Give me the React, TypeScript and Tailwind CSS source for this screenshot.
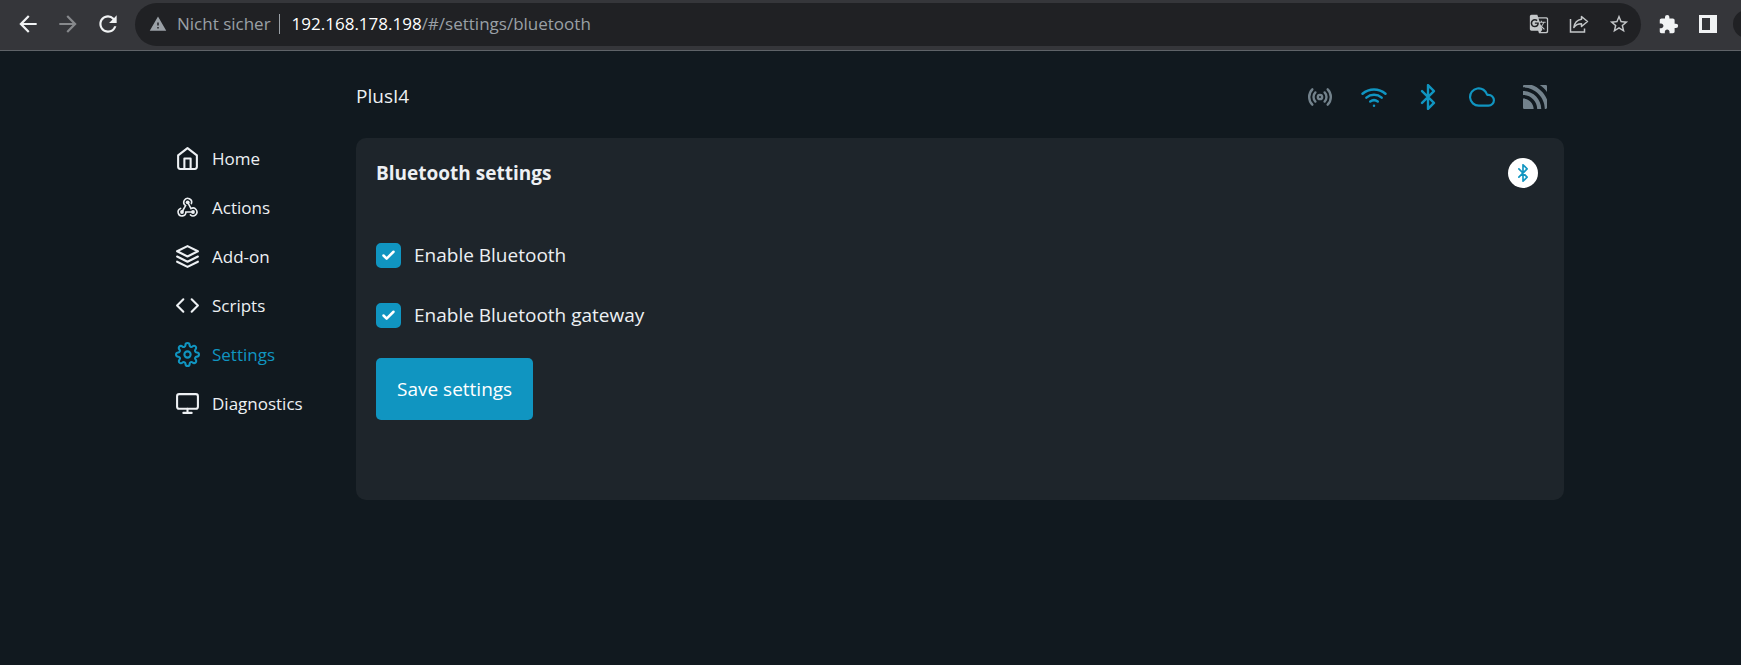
import type { ReactNode } from 'react';
import { FiBluetooth, FiCloud, FiCode, FiHome, FiLayers, FiMonitor, FiRadio, FiSettings, FiWifi } from 'react-icons/fi';
import { MdArrowBack, MdArrowForward, MdExtension, MdGTranslate, MdRefresh, MdStarBorder, MdWarning } from 'react-icons/md';
import { SiMqtt } from 'react-icons/si';

const WebhookIcon = () => (
  <svg width="25" height="25" viewBox="0 0 25 25" fill="none" stroke="currentColor" strokeWidth="1.6" strokeLinecap="round">
    <path d="M7 17l3.600-6.400A3.900 3.900 0 1 1 16.400 8.600" />
    <path d="M12.700 7.300l3.300 6.300A3.900 3.900 0 1 1 15.400 19.900" />
    <path d="M18 17H10.900A3.900 3.900 0 1 1 5.600 13.400" />
    <g fill="currentColor" stroke="none">
      <circle cx="12.7" cy="7.3" r="1.9" />
      <circle cx="7" cy="17" r="1.9" />
      <circle cx="18" cy="17" r="1.9" />
    </g>
  </svg>
);

const navItems = [
  { label: 'Home', icon: <FiHome size={25} /> },
  { label: 'Actions', icon: <WebhookIcon /> },
  { label: 'Add-on', icon: <FiLayers size={25} /> },
  { label: 'Scripts', icon: <FiCode size={25} /> },
  { label: 'Settings', icon: <FiSettings size={25} />, active: true },
  { label: 'Diagnostics', icon: <FiMonitor size={25} /> },
];

const statusItems = [
  { label: 'Access point', icon: <FiRadio size={26} strokeWidth={2.2} />, on: false },
  { label: 'Wi-Fi', icon: <FiWifi size={26} strokeWidth={2.3} />, on: true },
  { label: 'Bluetooth', icon: <FiBluetooth size={26} strokeWidth={2.2} />, on: true },
  { label: 'Cloud', icon: <FiCloud size={26} />, on: true },
  { label: 'MQTT', icon: <SiMqtt size={24} />, on: false },
];

const ToolButton = ({ label, children }: { label: string; children: ReactNode }) => (
  <button type="button" aria-label={label} className="flex w-10 shrink-0 items-center justify-center">
    {children}
  </button>
);

const BrowserBar = () => {
  return (
    <div className="flex h-[51px] items-center overflow-hidden border-b border-[#5f6368] bg-[#35363a] pb-[2px] pl-2 text-[#f1f3f4]">
      <ToolButton label="Back"><MdArrowBack size={26} /></ToolButton>
      <ToolButton label="Forward"><MdArrowForward size={26} className="text-[#87898c]" /></ToolButton>
      <ToolButton label="Reload"><MdRefresh size={26} /></ToolButton>

      <div className="ml-[7px] flex h-[43px] min-w-0 flex-1 items-center rounded-full bg-[#202124] pl-3 text-[17px] text-[#9aa0a6]">
        <MdWarning size={18} className="mx-[2px] shrink-0" />
        <span className="ml-2 whitespace-nowrap">Nicht sicher</span>
        <span className="ml-2 mr-3 h-5 w-px bg-[#9aa0a6]"></span>
        <span className="flex-1 truncate">
          <span className="text-white">192.168.178.198</span>/#/settings/bluetooth
        </span>
        <div className="mr-[2px] flex text-[#c4c7c9]">
          <ToolButton label="Translate"><MdGTranslate size={20} /></ToolButton>
          <ToolButton label="Share">
            <svg width="20" height="20" viewBox="0 0 20 20" fill="none" stroke="currentColor" strokeWidth="1.5">
              <path d="M1.5 5v13h14v-3.5" />
              <path d="M12.5 2.5 18.500 7.500l-6 5V9.800C9 9.800 6.500 11 4.800 13.500 5.500 9 8.200 5.800 12.500 5.200Z" strokeLinejoin="round" />
            </svg>
          </ToolButton>
          <ToolButton label="Bookmark"><MdStarBorder size={22} /></ToolButton>
        </div>
      </div>

      <div className="flex pl-[7px]">
        <ToolButton label="Extensions"><MdExtension size={21} /></ToolButton>
        <ToolButton label="Side panel">
          <svg width="18" height="18" viewBox="0 0 18 18" fill="currentColor" fillRule="evenodd">
            <path d="M0 0h18v18H0zM3 3v12h8V3z" />
          </svg>
        </ToolButton>
      </div>
      <span className="-mr-5 ml-[5px] size-7 shrink-0 rounded-full bg-[#202124]"></span>
    </div>
  );
};

const Checkbox = ({ id, label }: { id: string; label: string }) => (
  <div className="flex h-[25px] items-center gap-[13px]">
    <span className="grid size-[25px]">
      <input
        id={id}
        type="checkbox"
        defaultChecked
        className="peer col-start-1 row-start-1 size-[25px] appearance-none rounded-[5px] border-2 border-[#1095c1] checked:bg-[#1095c1]"
      />
      <svg
        viewBox="0 0 24 24"
        fill="none"
        stroke="white"
        strokeWidth="4"
        strokeLinecap="round"
        strokeLinejoin="round"
        className="pointer-events-none invisible col-start-1 row-start-1 size-[15px] place-self-center peer-checked:visible"
      >
        <path d="M20 6 9 17l-5-5" />
      </svg>
    </span>
    <label htmlFor={id}>{label}</label>
  </div>
);

const App = () => {
  return (
    <div className="min-h-screen bg-[#11191f] font-['Segoe_UI','Open_Sans',sans-serif] text-[19px] text-[#edf0f3]">
      <BrowserBar />

      <div className="mx-auto flex max-w-[1391px] pr-[2px]">
        <nav className="w-[181px] shrink-0 pt-[83px] text-[17px]">
          <ul>
            {navItems.map((item) => (
              <li key={item.label}>
                <a
                  href={`#/${item.label.toLowerCase()}`}
                  className={item.active ? 'flex h-[49px] items-center gap-3 text-[#1095c1]' : 'flex h-[49px] items-center gap-3'}
                >
                  {item.icon}
                  {item.label}
                </a>
              </li>
            ))}
          </ul>
        </nav>

        <main className="min-w-0 flex-1">
          <header className="flex h-[87px] items-center justify-between pr-[17px] pt-1">
            <span>PlusI4</span>
            <div className="flex items-center gap-7">
              {statusItems.map((item) => (
                <span key={item.label} role="img" aria-label={item.label} className={item.on ? 'text-[#1095c1]' : 'text-[#73828c]'}>
                  {item.icon}
                </span>
              ))}
            </div>
          </header>

          <section className="rounded-[10px] bg-[#1e252b] px-5 pb-20 pt-5">
            <div className="mb-[55px] flex h-[30px] items-center justify-between pr-[6px]">
              <h1 className="font-bold">Bluetooth settings</h1>
              <span className="flex size-[30px] items-center justify-center rounded-full bg-white text-[#1095c1]">
                <FiBluetooth size={18} strokeWidth={2.2} />
              </span>
            </div>

            <form className="flex flex-col items-start">
              <div className="mb-[30px] flex flex-col gap-[35px]">
                <Checkbox id="enable" label="Enable Bluetooth" />
                <Checkbox id="gateway" label="Enable Bluetooth gateway" />
              </div>
              <button type="button" className="h-[62px] rounded-[5px] bg-[#1095c1] px-[21px] text-white">
                Save settings
              </button>
            </form>
          </section>
        </main>
      </div>
    </div>
  );
};

export default App;
